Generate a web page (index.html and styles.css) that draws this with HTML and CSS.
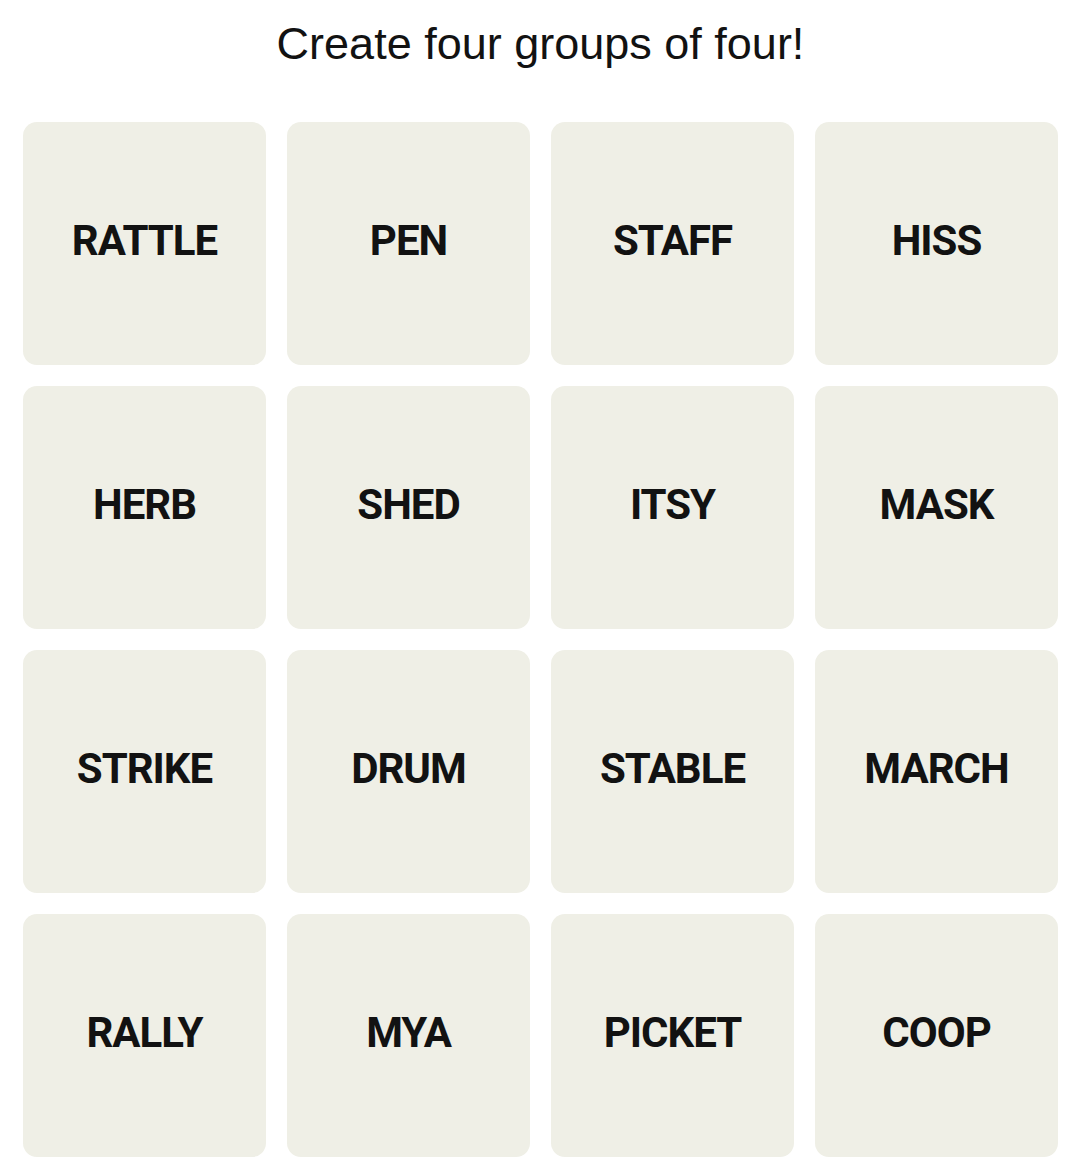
FILE: index.html
```html
<!DOCTYPE html>
<html lang="en">
<head>
<meta charset="utf-8">
<title>Connections</title>
<link rel="stylesheet" href="styles.css">
</head>
<body>
<main class="game">
  <h1 class="prompt">Create four groups of four!</h1>
  <div class="board">
    <button class="tile">RATTLE</button>
    <button class="tile">PEN</button>
    <button class="tile">STAFF</button>
    <button class="tile">HISS</button>
    <button class="tile">HERB</button>
    <button class="tile">SHED</button>
    <button class="tile">ITSY</button>
    <button class="tile">MASK</button>
    <button class="tile">STRIKE</button>
    <button class="tile">DRUM</button>
    <button class="tile">STABLE</button>
    <button class="tile">MARCH</button>
    <button class="tile">RALLY</button>
    <button class="tile">MYA</button>
    <button class="tile">PICKET</button>
    <button class="tile">COOP</button>
  </div>
</main>
</body>
</html>
```

FILE: styles.css
```css
html, body {
  margin: 0;
  padding: 0;
  background: #ffffff;
}

.game {
  padding: 18px 22px 0 23px;
  color: #121212;
}

.prompt {
  margin: 0 0 52px;
  font-family: "Liberation Sans", Arial, sans-serif;
  font-weight: 400;
  font-size: 45px;
  line-height: 52px;
  text-align: center;
  color: #121212;
}

.board {
  display: grid;
  grid-template-columns: repeat(4, 243px);
  grid-auto-rows: 243px;
  gap: 21px;
}

.tile {
  display: flex;
  align-items: center;
  justify-content: center;
  border: none;
  border-radius: 14px;
  background: #efefe6;
  color: #121212;
  font-family: Roboto, "Liberation Sans", sans-serif;
  font-weight: 700;
  font-size: 42px;
  letter-spacing: -1px;
  padding: 0 0 6px;
  margin: 0;
}
```
